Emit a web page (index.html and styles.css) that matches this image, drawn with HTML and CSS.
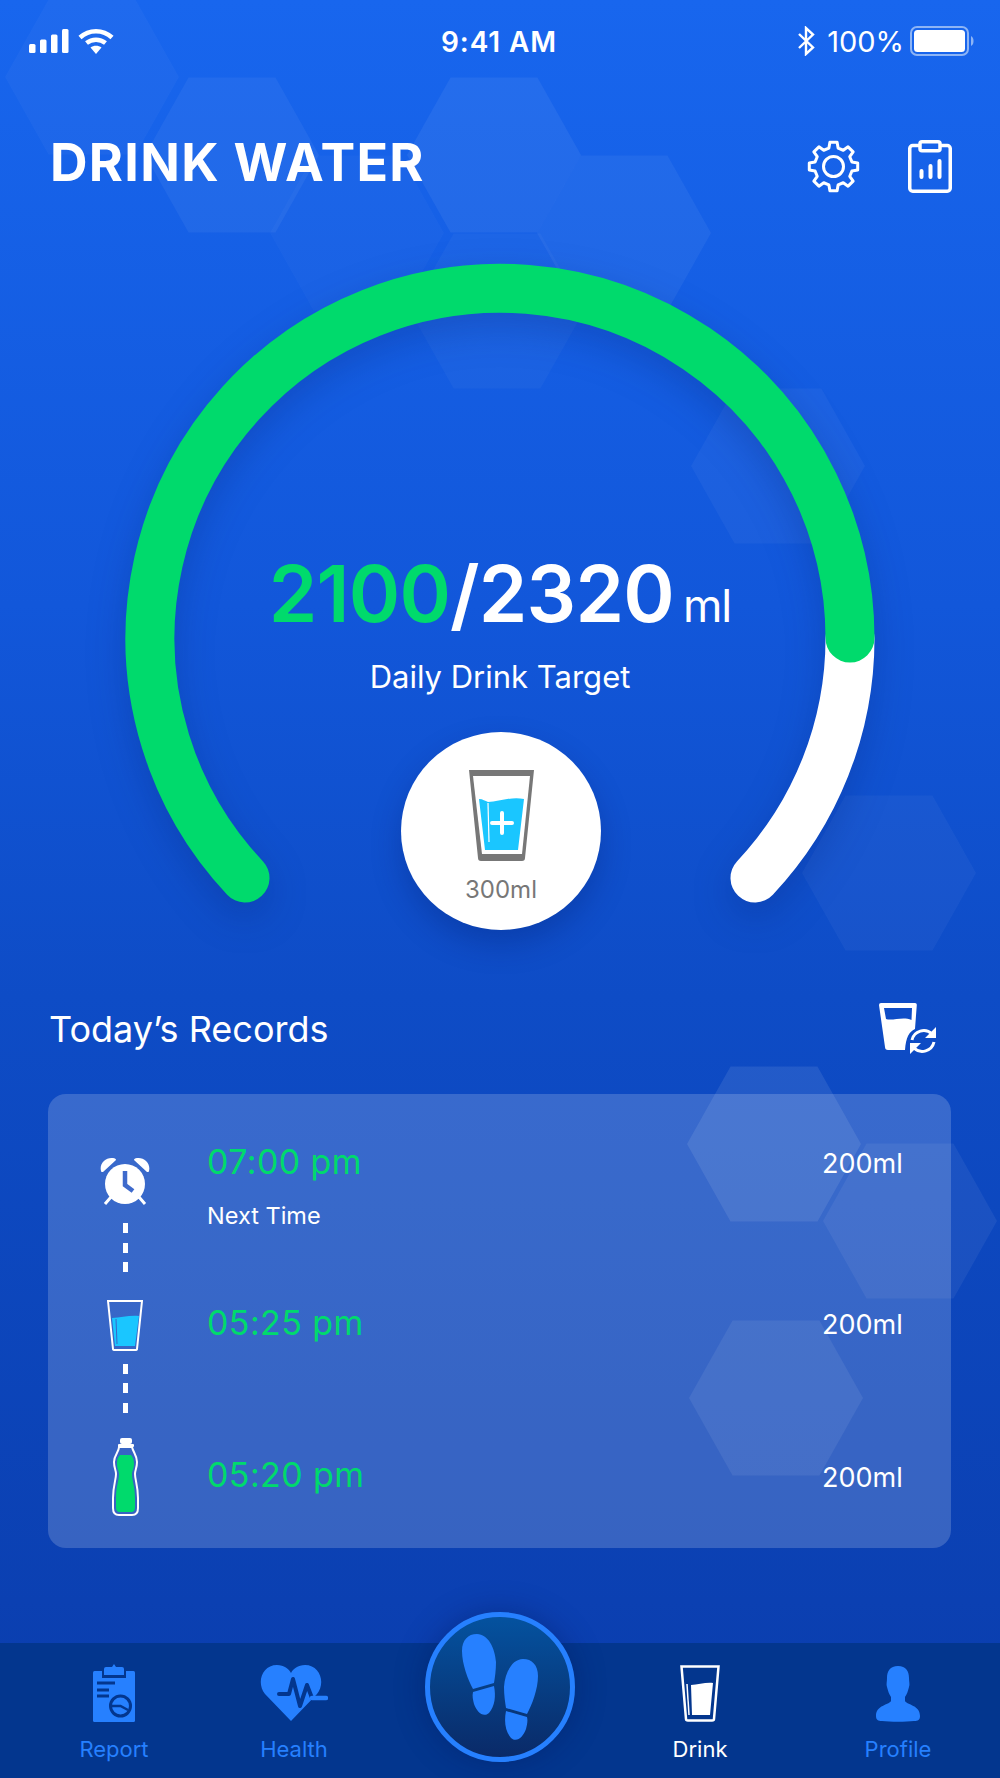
FILE: index.html
```html
<!DOCTYPE html>
<html lang="en">
<head>
    <meta charset="UTF-8">
    <meta name="viewport" content="width=device-width, initial-scale=1.0">
    <title>Drink Water</title>
    <link rel="stylesheet" href="styles.css">
</head>
<body>
<div class="page">
    <!-- hexagon backdrop -->
    <svg class="hexes" width="1000" height="1778" viewBox="0 0 1000 1778">
        <defs>
            <polygon id="hex" points="-87,0 -43.5,-77.5 43.5,-77.5 87,0 43.5,77.5 -43.5,77.5"/>
        </defs>
        <use href="#hex" x="92" y="77" opacity="0.03"/>
        <use href="#hex" x="232" y="155" opacity="0.05"/>
        <use href="#hex" x="494" y="155" opacity="0.06"/>
        <use href="#hex" x="357" y="233" opacity="0.025"/>
        <use href="#hex" x="624" y="233" opacity="0.05"/>
        <use href="#hex" x="497" y="311" opacity="0.03"/>
        <use href="#hex" x="778" y="466" opacity="0.04"/>
        <use href="#hex" x="889" y="873" opacity="0.04"/>
        <use href="#hex" x="774" y="1144" opacity="0.09"/>
        <use href="#hex" x="910" y="1221" opacity="0.06"/>
        <use href="#hex" x="776" y="1398" opacity="0.07"/>
    </svg>

    <div class="status-bar">
        <div class="status-left">
            <svg width="40" height="24" viewBox="0 0 40 24" fill="#fff">
                <rect x="0" y="15" width="6.5" height="9" rx="1.5"/>
                <rect x="11" y="10.500" width="6.500" height="13.500" rx="1.500"/>
                <rect x="22" y="5.500" width="6.500" height="18.500" rx="1.500"/>
                <rect x="33" y="0" width="6.500" height="24" rx="1.500"/>
            </svg>
            <svg width="36" height="26" viewBox="0 0 36 26" fill="none" stroke="#fff" stroke-width="4.500">
                <path d="M2 9.500C11 1 25 1 34 9.500"/>
                <path d="M8.500 15C14 10.500 22 10.500 27.500 15"/>
                <path d="M18 26L12.500 19.500C15.500 17 20.500 17 23.500 19.500Z" fill="#fff" stroke="none"/>
            </svg>
        </div>
        <div class="status-time">9:41 AM</div>
        <div class="status-right">
            <svg class="bt-icon" width="18" height="30" viewBox="0 0 18 30" fill="none" stroke="#fff" stroke-width="2.400">
                <path d="M2 8L16 21.500L9 28V2L16 8.500L2 22"/>
            </svg>
            <span class="battery-text">100%</span>
            <svg width="64" height="30" viewBox="0 0 64 30">
                <rect x="1" y="1" width="57" height="28" rx="6" fill="none" stroke="#8db4f5" stroke-width="2"/>
                <rect x="4" y="4" width="51" height="22" rx="3.500" fill="#fff"/>
                <path d="M61 10C63 11 63.500 13 63.500 15S63 19 61 20Z" fill="#8db4f5"/>
            </svg>
        </div>
    </div>

    <header class="top-bar">
        <h1 class="app-title">DRINK WATER</h1>
        <div class="top-actions">
            <svg width="53" height="53" viewBox="-26.500 -26.500 53 53" fill="none" stroke="#fff" stroke-width="3" stroke-linejoin="round">
                <polygon points="-4.600,-18.400 -3.600,-24.200 3.600,-24.200 4.600,-18.400 9.760,-16.260 14.570,-19.660 19.660,-14.570 16.260,-9.760 18.400,-4.600 24.200,-3.600 24.200,3.600 18.400,4.600 16.260,9.760 19.660,14.570 14.570,19.660 9.760,16.260 4.600,18.400 3.600,24.200 -3.600,24.200 -4.600,18.400 -9.760,16.260 -14.570,19.660 -19.660,14.570 -16.260,9.760 -18.400,4.600 -24.200,3.600 -24.200,-3.600 -18.400,-4.600 -16.260,-9.760 -19.660,-14.570 -14.570,-19.660 -9.760,-16.260"/>
                <circle r="10"/>
            </svg>
            <svg width="44" height="53" viewBox="0 0 44 53" fill="none" stroke="#fff" stroke-width="3.500">
                <rect x="1.750" y="5.500" width="40.500" height="45.750" rx="3"/>
                <rect x="12" y="1.750" width="20" height="9" rx="2" fill="#1763ea"/>
                <path d="M13.500 37V31M22.500 37V26M31.500 37V21" stroke-width="4" stroke-linecap="round"/>
            </svg>
        </div>
    </header>

    <section class="gauge">
        <svg class="gauge-arc" width="1000" height="798" viewBox="0 0 1000 798" fill="none" stroke-width="49" stroke-linecap="round">
            <path d="M850 436A350 350 0 0 1 755 676" stroke="#fff"/>
            <path d="M245 676A350 350 0 1 1 850 436" stroke="#00da6c"/>
        </svg>
        <div class="gauge-total"><span class="gauge-done">2100</span>/2320<span class="gauge-unit">ml</span></div>
        <div class="gauge-label">Daily Drink Target</div>
        <button class="add-drink">
            <svg width="65" height="91" viewBox="0 0 65 91">
                <path d="M0 0H65L56 88Q56 91 53 91H12Q9 91 9 88Z" fill="#777"/>
                <path d="M4 6H61L53 84H13Z" fill="#fff"/>
                <path d="M10 29C14 29 16 31 19 32C30 32 42 26 55 29L49 80H16Z" fill="#1ac6ff"/>
                <path d="M19 33L20 72" stroke="#fff" stroke-width="1.200" fill="none"/>
                <path d="M33 43V63M23 53H43" stroke="#fff" stroke-width="4" stroke-linecap="round" fill="none"/>
            </svg>
            <span class="add-amount">300ml</span>
        </button>
    </section>

    <div class="records-head">
        <h2 class="records-title">Today’s Records</h2>
        <svg width="58" height="52" viewBox="0 0 58 52">
            <path d="M0 2Q0 0 2 0H36Q38 0 37.800 2L36 26C30 29 27 34 26 47H9Q6 47 6 44Z" fill="#fff"/>
            <path d="M5 5H33L32.500 17C24 13 14 18 7 16Z" fill="#0e4cc6"/>
            <g fill="none" stroke="#fff" stroke-width="3">
                <path d="M33 37A12 12 0 0 1 53 31"/>
                <path d="M55 39A12 12 0 0 1 35 45"/>
            </g>
            <path d="M57 24V35H46ZM31 51V40H42Z" fill="#fff"/>
        </svg>
    </div>

    <div class="records-card">
        <div class="record record-next">
            <div class="record-track">
                <svg width="50" height="50" viewBox="0 0 50 50">
                    <path d="M1 14C-1 6 6 0 13 1C15 1 16 2 16 3L3 15C2 15 1 15 1 14ZM49 14C51 6 44 0 37 1C35 1 34 2 34 3L47 15C48 15 49 15 49 14Z" fill="#fff"/>
                    <circle cx="25" cy="27" r="20" fill="#fff"/>
                    <path d="M11 40L5 47M39 40L45 47" stroke="#fff" stroke-width="3" fill="none"/>
                    <path d="M25 14V28L33 34" stroke="#3e6acc" stroke-width="4.500" fill="none"/>
                </svg>
                <div class="dash-line"></div>
            </div>
            <div class="record-info">
                <div class="record-time">07:00 pm</div>
                <div class="record-note">Next Time</div>
            </div>
            <div class="record-amount">200ml</div>
        </div>
        <div class="record record-glass">
            <div class="record-track">
                <svg width="36" height="51" viewBox="0 0 36 51">
                    <path d="M1 1H35L30 49Q30 50 28 50H8Q6 50 6 49Z" fill="none" stroke="#fff" stroke-width="2"/>
                    <path d="M5 18C14 18 22 15 32 16L28 46H8Z" fill="#1ac6ff"/>
                    <path d="M9 19L10 44" stroke="#3b66c8" stroke-width="1"/>
                </svg>
                <div class="dash-line"></div>
            </div>
            <div class="record-info">
                <div class="record-time">05:25 pm</div>
            </div>
            <div class="record-amount">200ml</div>
        </div>
        <div class="record record-bottle">
            <div class="record-track">
                <svg width="27" height="78" viewBox="0 0 27 78">
                    <rect x="8" y="0" width="12" height="6" rx="2" fill="#fff"/>
                    <rect x="6" y="6" width="16" height="3" rx="1" fill="#fff"/>
                    <path d="M7 9C7 14 2 17 2 24C2 30 4 32 4 36C4 42 1 48 1 60V70C1 75 3 77 7 77H20C24 77 26 75 26 70V60C26 48 23 42 23 36C23 32 25 30 25 24C25 17 21 14 20 9Z" fill="none" stroke="#fff" stroke-width="2"/>
                    <path d="M8 17C5 20 5 23 5 26C5 31 7 33 7 36C7 43 4 48 4 60V69C4 72 5 74 8 74H19C22 74 23 72 23 69V60C23 48 20 43 20 36C20 33 22 31 22 26C22 22 21 19 19 17Z" fill="#00da6c"/>
                </svg>
            </div>
            <div class="record-info">
                <div class="record-time">05:20 pm</div>
            </div>
            <div class="record-amount">200ml</div>
        </div>
    </div>

    <nav class="tab-bar">
        <a class="tab tab-report">
            <svg width="42" height="58" viewBox="0 0 42 58">
                <rect x="0" y="7" width="42" height="51" rx="1.500" fill="#2680ff"/>
                <path d="M9 7V14H33V7" fill="#03368e"/>
                <path d="M11 5Q11 3 13 3H19L21 0L23 3H29Q31 3 31 5V11H11Z" fill="#2680ff"/>
                <path d="M4 19H22M4 26H16M4 32H16" stroke="#03368e" stroke-width="3" fill="none"/>
                <circle cx="27.500" cy="42" r="10" fill="none" stroke="#03368e" stroke-width="3"/>
                <path d="M19 42H27.500L35 46" stroke="#03368e" stroke-width="2.500" fill="none"/>
            </svg>
            <span>Report</span>
        </a>
        <a class="tab tab-health">
            <svg width="68" height="57" viewBox="0 0 68 57">
                <path d="M31 56L5 29C-4 18 2 0 17 0C24 0 29 4 31 8C33 4 38 0 45 0C60 0 66 18 57 29Z" fill="#2680ff"/>
                <path d="M19 29H29L33 14L40 41L47 20L52 33" stroke="#03368e" stroke-width="4" fill="none" stroke-linecap="round" stroke-linejoin="round"/>
                <path d="M52 33H66" stroke="#2680ff" stroke-width="4.500" fill="none" stroke-linecap="round"/>
            </svg>
            <span>Health</span>
        </a>
        <a class="tab tab-drink">
            <svg width="40" height="57" viewBox="0 0 40 57">
                <path d="M1.500 1.500H38.500L34 54Q34 55.500 32 55.500H8Q6 55.500 6 54Z" fill="none" stroke="#fff" stroke-width="2.500"/>
                <path d="M11 20C18 20 26 17 33 18L30 50H12Z" fill="#fff"/>
                <path d="M7 19L9 50" stroke="#fff" stroke-width="1.500" fill="none"/>
            </svg>
            <span>Drink</span>
        </a>
        <a class="tab tab-profile">
            <svg width="44" height="56" viewBox="0 0 44 56">
                <path d="M22 0C30 0 33 5 33 12C33 16 34 18 33 21C32 25 31 28 29 31V35C31 39 44 39 44 50C44 54 42 55 38 55C30 56 14 56 6 55C2 55 0 54 0 50C0 39 13 39 15 35V31C13 28 12 25 11 21C10 18 11 16 11 12C11 5 14 0 22 0Z" fill="#2680ff"/>
            </svg>
            <span>Profile</span>
        </a>
        <button class="steps-button">
            <svg width="76" height="106" viewBox="0 0 76 106" fill="#2680ff">
                <path id="foot" d="M15 0C26 0 33 14 34 28C34 36 33 43 32 49L11 55C6 46 0 30 0 17C0 6 6 0 15 0ZM11 58L32 52C34 62 33 72 27 79C21 84 15 78 12 70C11 66 10 62 11 58Z"/>
                <use href="#foot" transform="translate(76 25) scale(-1 1)"/>
            </svg>
        </button>
    </nav>
</div>
</body>
</html>
```

FILE: styles.css
```css
* {
    box-sizing: border-box;
}
html, body {
    margin: 0;
    padding: 0;
}
body {
    font-family: Inter, "Liberation Sans", sans-serif;
    color: #fff;
}
h1, h2 {
    margin: 0;
}
svg {
    display: block;
}
.page {
    position: relative;
    width: 1000px;
    height: 1778px;
    overflow: hidden;
    display: flex;
    flex-direction: column;
    background: linear-gradient(180deg, #1866ee 0%, #1257da 34%, #0e4cc6 56%, #0b40b2 90%, #0a3cab 100%);
}
.hexes {
    position: absolute;
    top: 0;
    left: 0;
    fill: #fff;
}
.status-bar, .top-bar, .gauge, .records-head, .records-card, .tab-bar {
    position: relative;
}

/* status bar */
.status-bar {
    height: 82px;
    padding: 0 26px 0 29px;
    display: flex;
    justify-content: space-between;
    align-items: center;
}
.status-left, .status-right {
    width: 178px;
    display: flex;
    align-items: center;
}
.status-left {
    gap: 9px;
}
.status-right {
    justify-content: flex-end;
    gap: 6px;
}
.bt-icon {
    margin-right: 6px;
}
.status-time {
    font-size: 28px;
    font-weight: 600;
    letter-spacing: 0.9px;
    margin: 2px 0 0 -5px;
}
.battery-text {
    font-size: 29px;
}

/* title row */
.top-bar {
    height: 80px;
    margin-top: 40px;
    padding: 0 48px 0 50px;
    display: flex;
    justify-content: space-between;
    align-items: center;
}
.app-title {
    font-size: 52px;
    font-weight: 700;
    letter-spacing: 1.3px;
}
.top-actions {
    display: flex;
    gap: 48px;
    margin-top: 8px;
}

/* big ring */
.gauge {
    height: 798px;
    padding-top: 352px;
    display: flex;
    flex-direction: column;
    align-items: center;
}
.gauge-arc {
    position: absolute;
    top: 0;
    left: 0;
    filter: drop-shadow(0 14px 18px rgba(4, 30, 110, 0.25));
}
.gauge-total {
    position: relative;
    font-size: 78px;
    line-height: 80px;
    font-weight: 600;
    letter-spacing: -0.8px;
    white-space: nowrap;
}
.gauge-done {
    color: #00da6c;
}
.gauge-unit {
    font-size: 45px;
    line-height: 1;
    font-weight: 400;
    letter-spacing: -1px;
    margin-left: 9px;
}
.gauge-label {
    position: relative;
    margin-top: 23px;
    font-size: 31px;
    line-height: 40px;
}
.add-drink {
    position: relative;
    width: 200px;
    height: 198px;
    margin: 35px 0 0 2px;
    padding: 38px 0 0;
    border: 0;
    border-radius: 50%;
    background: #fff;
    box-shadow: 0 14px 30px rgba(4, 30, 110, 0.3);
    display: flex;
    flex-direction: column;
    align-items: center;
    font-family: inherit;
}
.add-amount {
    margin-top: 14px;
    font-size: 24px;
    line-height: 30px;
    color: #777;
}

/* today's records */
.records-head {
    height: 58px;
    padding: 0 63px 0 49px;
    display: flex;
    justify-content: space-between;
    align-items: center;
}
.records-title {
    font-size: 36px;
    font-weight: 400;
}
.records-card {
    width: 903px;
    height: 454px;
    margin: 36px 0 0 48px;
    padding-top: 63px;
    border-radius: 18px;
    background: rgba(255, 255, 255, 0.18);
}
.record {
    display: flex;
    align-items: flex-start;
}
.record-glass {
    margin-top: 28px;
}
.record-bottle {
    margin-top: 25px;
}
.record-track {
    width: 50px;
    margin-left: 52px;
    display: flex;
    flex-direction: column;
    align-items: center;
}
.dash-line {
    width: 5px;
    height: 49px;
    margin-top: 16px;
    background: repeating-linear-gradient(180deg, #fff 0, #fff 10px, transparent 10px, transparent 19.5px);
}
.record-glass .dash-line {
    margin-top: 13px;
}
.record-info {
    flex: 1;
    margin-left: 57px;
}
.record-time {
    font-size: 34px;
    line-height: 40px;
    letter-spacing: 0.4px;
    color: #00da6c;
}
.record-note {
    margin-top: 19px;
    font-size: 23.5px;
    line-height: 30px;
}
.record-amount {
    width: 128px;
    font-size: 27px;
    line-height: 30px;
    margin-right: 1px;
}
.record-next .record-info {
    margin-top: -15px;
}
.record-next .record-amount {
    margin-top: -8px;
}
.record-glass .record-info {
    margin-top: 3px;
}
.record-glass .record-amount {
    margin-top: 10px;
}
.record-bottle .record-info {
    margin-top: 17px;
}
.record-bottle .record-amount {
    margin-top: 25px;
}

/* bottom tabs */
.tab-bar {
    height: 135px;
    margin-top: auto;
    padding: 21px 0 0 54px;
    display: flex;
    align-items: flex-start;
    background: #03368e;
}
.tab {
    width: 120px;
    height: 100px;
    display: flex;
    flex-direction: column;
    align-items: center;
    justify-content: flex-end;
    font-size: 22px;
    line-height: 30px;
    color: #2680ff;
}
.tab svg {
    margin-bottom: 12px;
}
.tab-report {
    margin-right: 60px;
}
.tab-health {
    margin-right: 286px;
}
.tab-drink {
    margin-right: 78px;
    color: #fff;
}
.steps-button {
    position: absolute;
    left: 425px;
    top: -31px;
    width: 150px;
    height: 150px;
    padding: 0;
    border: 5px solid #2680ff;
    border-radius: 50%;
    background: linear-gradient(180deg, #04529f 0%, #0a2a68 100%);
    box-shadow: 0 0 30px rgba(3, 20, 80, 0.35);
    display: flex;
    align-items: center;
    justify-content: center;
}
```
